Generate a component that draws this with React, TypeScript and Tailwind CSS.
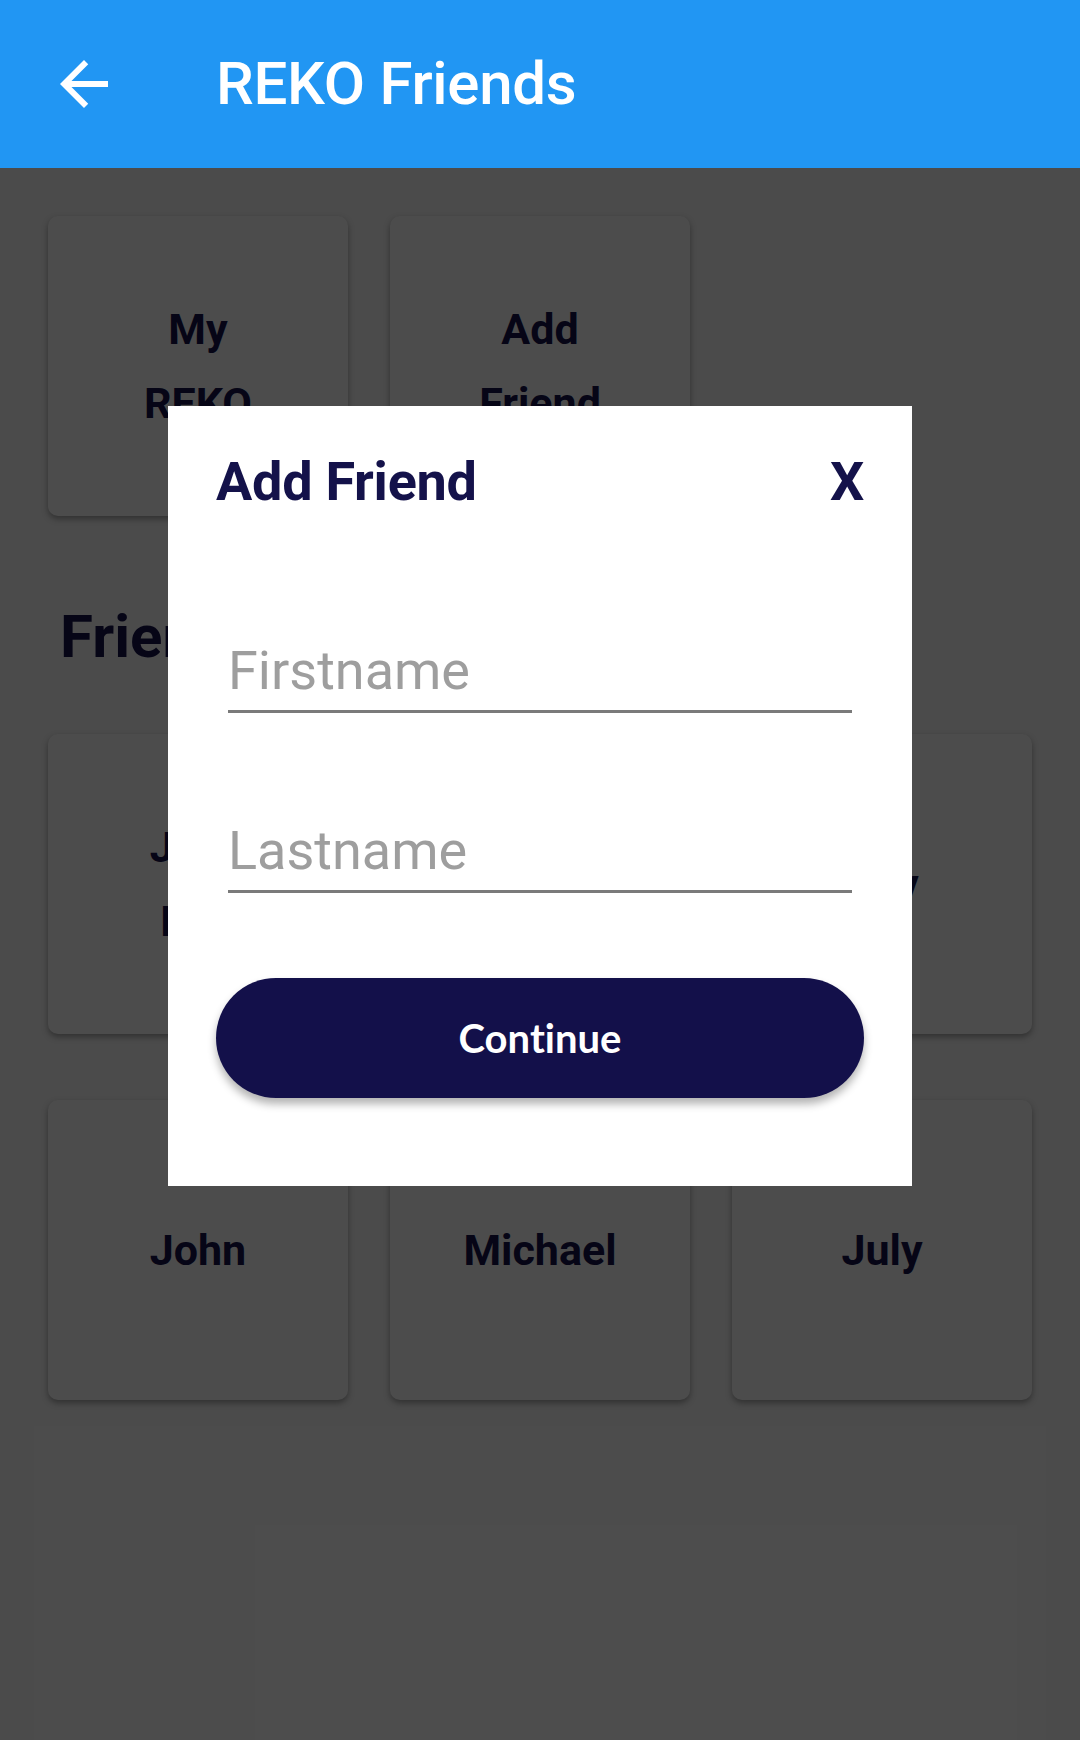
import React from 'react'

const topCards = [['My', 'REKO'], ['Add', 'Friend']]
const friends = [['John', 'Doe'], ['Anna'], ['Roy'], ['John'], ['Michael'], ['July']]

function Card({ lines }: { lines: string[] }) {
  return (
    <div className="h-[300px] rounded-[10px] bg-white shadow-[0_3px_6px_rgba(0,0,0,0.35)] flex items-center justify-center">
      <p className="text-center text-[43px] leading-[74px] font-bold text-[#14124a]">
        {lines.map(l => (
          <span key={l} className="block">{l}</span>
        ))}
      </p>
    </div>
  )
}

export default function App() {
  return (
    <div className="relative min-h-[1740px] overflow-hidden bg-[#fafafa] font-['Roboto',sans-serif]">
      {/* App bar */}
      <header className="h-[168px] bg-[#2196f3] flex items-center">
        <button className="ml-[48px] w-[72px] h-[72px] flex items-center justify-center">
          <svg width="72" height="72" viewBox="0 0 24 24" fill="#ffffff">
            <path d="M20 11H7.83l5.59-5.59L12 4l-8 8 8 8 1.41-1.41L7.83 13H20v-2z" />
          </svg>
        </button>
        <h1 className="ml-[96px] text-[60px] leading-[70px] font-medium tracking-[-0.005em] text-white">REKO Friends</h1>
      </header>

      <main className="px-[48px] pt-[48px]">
        <div className="grid grid-cols-3 gap-x-[42px]">
          {topCards.map((c, i) => <Card key={i} lines={c} />)}
        </div>

        <h2 className="mt-[86px] ml-[12px] text-[60px] leading-[70px] font-bold text-[#14124a]">Friends</h2>

        <div className="mt-[62px] grid grid-cols-3 gap-x-[42px] gap-y-[66px]">
          {friends.map((f, i) => <Card key={i} lines={f} />)}
        </div>

        <div className="mt-[26px] -mx-[14px] h-[320px] bg-white" />
      </main>

      {/* dialog barrier */}
      <div className="absolute inset-x-0 top-[168px] bottom-0 bg-black/70" />

      {/* Add friend dialog */}
      <div className="absolute left-[168px] top-[406px] w-[744px] h-[780px] bg-white px-[48px] pt-[44px]">
        <div className="flex justify-between text-[54px] leading-[64px] font-bold tracking-[-0.005em] text-[#14124a]">
          <span>Add Friend</span>
          <span>X</span>
        </div>

        <input
          placeholder="Firstname"
          className="block mt-[124px] mx-[12px] w-[624px] h-[75px] pb-[8px] border-b-[3px] border-[#7a7a7a] text-[54px] leading-[64px] text-[#212121] placeholder:text-[#9e9e9e] outline-none"
        />
        <input
          placeholder="Lastname"
          className="block mt-[105px] mx-[12px] w-[624px] h-[75px] pb-[8px] border-b-[3px] border-[#7a7a7a] text-[54px] leading-[64px] text-[#212121] placeholder:text-[#9e9e9e] outline-none"
        />

        <button className="mt-[85px] w-full h-[120px] rounded-full bg-[#13104a] text-white text-[40px] font-bold font-['Lato',sans-serif] [font-variant-ligatures:none] shadow-[0_6px_8px_rgba(0,0,0,0.3)]">
          Continue
        </button>
      </div>
    </div>
  )
}
